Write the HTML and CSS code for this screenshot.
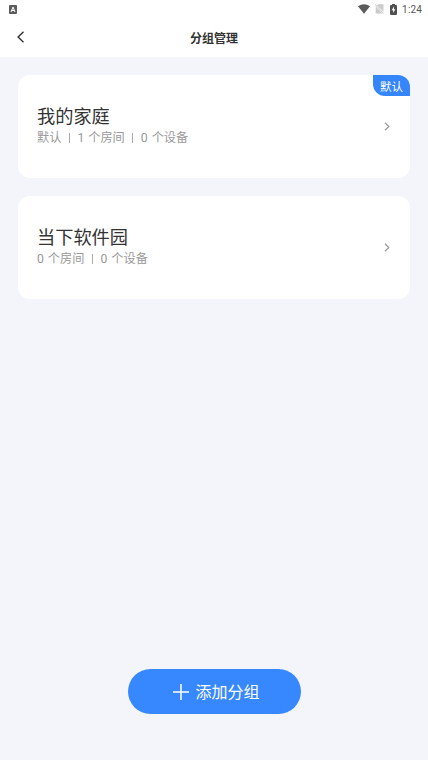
FILE: index.html
```html
<!DOCTYPE html>
<html lang="zh-CN">
<head>
<meta charset="utf-8">
<title>分组管理</title>
<link rel="stylesheet" href="styles.css">
</head>
<body>
<div class="screen">
  <header class="top">
    <div class="status">
      <svg class="app-icon" width="8" height="9" viewBox="0 0 8 9"><rect width="8" height="9" rx="1" fill="#5c5c5c"/><path d="M2 7L4 2L6 7M2.8 5.5H5.2" fill="none" stroke="#fff" stroke-width="1"/></svg>
      <div class="indicators">
        <svg width="12" height="10" viewBox="0 0 12 10"><path d="M0 2.3Q6-2 12 2.3L6 9.8Z" fill="#5c5c5c"/></svg>
        <svg width="9" height="10" viewBox="0 0 9 10"><path d="M3.2 .3H8.5V7.4L2 1.5Z M.7 2.4L7.5 9.5H.7Z" fill="#cbcbcb"/><path d="M.2 .5L8.7 9.5" stroke="#b0b0b0" stroke-width=".8"/></svg>
        <svg width="7" height="11" viewBox="0 0 7 11"><path d="M2 0H5V1H6.2Q7 1 7 2V10Q7 11 6 11H1Q0 11 0 10V2Q0 1 1 1H2Z" fill="#505050"/><path d="M4 2.5L1.6 6.3H3.2V9L5.4 5.2H4Z" fill="#fff"/></svg>
        <span class="time">1:24</span>
      </div>
    </div>
    <nav class="nav">
      <svg class="back" width="8" height="12" viewBox="0 0 8 12"><path d="M6.5.8L1.1 6L6.5 11.2" fill="none" stroke="#333" stroke-width="1.4"/></svg>
      <h1>分组管理</h1>
    </nav>
  </header>
  <main class="list">
    <section class="card">
      <div>
        <h2>我的家庭</h2>
        <p><span>默认</span><i></i><span>1 个房间</span><i></i><span>0 个设备</span></p>
      </div>
      <svg width="6" height="9" viewBox="0 0 6 9"><path d="M1 .8L4.8 4.5L1 8.2" fill="none" stroke="#999" stroke-width="1.2"/></svg>
      <span class="badge">默认</span>
    </section>
    <section class="card">
      <div>
        <h2>当下软件园</h2>
        <p><span>0 个房间</span><i></i><span>0 个设备</span></p>
      </div>
      <svg width="6" height="9" viewBox="0 0 6 9"><path d="M1 .8L4.8 4.5L1 8.2" fill="none" stroke="#999" stroke-width="1.2"/></svg>
    </section>
  </main>
  <button class="add">
    <svg width="16" height="16" viewBox="0 0 16 16"><path d="M8 0V16M0 8H16" stroke="#fff" stroke-width="1.5"/></svg>
    <span>添加分组</span>
  </button>
</div>
</body>
</html>
```
FILE: styles.css
```css
* { box-sizing: border-box; margin: 0; padding: 0; }
body { font-family: Roboto, "Noto Sans CJK SC", sans-serif; background: #f3f5fa; }
.screen { height: 760px; display: flex; flex-direction: column; align-items: center; padding-bottom: 46px; }
.top { width: 100%; height: 57px; background: #fff; }
.status { height: 18px; display: flex; justify-content: space-between; align-items: center; padding: 0 6px 0 9px; }
.indicators { display: flex; align-items: center; }
.indicators svg { margin-right: 5px; }
.indicators svg:nth-child(2) { margin-right: 6px; }
.time { font-size: 10px; line-height: 16px; padding-top: 1px; color: #555; letter-spacing: .15px; }
.nav { height: 38px; display: grid; grid-template-columns: 17px 1fr 17px; align-items: center; }
.back { grid-column: 2; grid-row: 1; }
.nav h1 { grid-column: 1 / 4; grid-row: 1; text-align: center; font-size: 12px; line-height: 18px; font-weight: 700; color: #333; padding-top: 3px; }
.list { width: 100%; flex: 1; padding: 18px; display: flex; flex-direction: column; gap: 18px; }
.card { position: relative; height: 103px; display: flex; align-items: center; justify-content: space-between; padding: 0 20px 0 19px; background: #fff; border-radius: 12px; }
.card h2 { font-size: 18.2px; line-height: 22px; padding-bottom: 1px; font-weight: 400; color: #333; }
.card p { display: flex; align-items: center; font-size: 12.2px; line-height: 18px; word-spacing: 1px; color: #999; }
.card i { width: 1px; height: 10px; background: #aaa; margin: 0 7.5px; }
.badge { position: absolute; top: 0; right: 0; width: 37px; height: 21px; border-radius: 0 12px 0 12px; background: #3585fb; color: #fff; font-size: 11.5px; line-height: 24px; text-align: center; }
.add { display: flex; align-items: center; justify-content: center; gap: 6px; width: 173px; height: 45px; border: 0; border-radius: 23px; background: #3788ff; color: #fff; font: inherit; font-size: 16px; line-height: 24px; padding-left: 5px; }
.add span { padding-top: 2px; }
```
